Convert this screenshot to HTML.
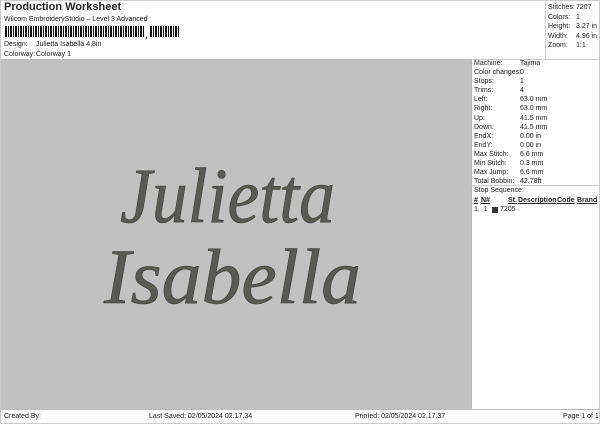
<!DOCTYPE html>
<html><head><style>
*{margin:0;padding:0;box-sizing:border-box}
body{width:600px;height:424px;background:#fff;font-family:"Liberation Sans",sans-serif;color:#222;position:relative;overflow:hidden;font-size:7px}
.a{position:absolute;white-space:nowrap}
#frame{position:absolute;left:0;top:0;width:600px;height:424px;border:1px solid #ccc}
#gray{position:absolute;left:1px;top:59px;width:470px;height:350px;background:#c1c1c1}
#rp{position:absolute;left:471px;top:59px;width:128px;height:350px;border-left:1px solid #bbb;border-top:1px solid #ccc}
#tr{position:absolute;left:545px;top:0;width:55px;height:59px;border-left:1px solid #ccc}
#foot{position:absolute;left:0;top:409px;width:600px;height:15px;border-top:1px solid #bbb}
.row{position:absolute;left:474px}
.v{position:absolute;left:520px}
</style></head><body>
<div id="frame"></div>
<div class="a" style="left:4px;top:1px;font-size:11px;font-weight:bold">Production Worksheet</div>
<div class="a" style="left:4px;top:16px">Wilcom EmbroideryStudio – Level 3 Advanced</div>
<div class="a" style="left:5px;top:26px;width:140px;height:11px;background:repeating-linear-gradient(90deg,#111 0 2px,#fff 2px 3px,#111 3px 4px,#fff 4px 5px)"></div>
<div class="a" style="left:145px;top:30px;font-size:9px;font-weight:bold">,</div>
<div class="a" style="left:150px;top:26px;width:30px;height:11px;background:repeating-linear-gradient(90deg,#111 0 2px,#fff 2px 3px,#111 3px 4px,#fff 4px 5px)"></div>
<div class="a" style="left:4px;top:41px">Design:</div><div class="a" style="left:36px;top:41px">Julietta Isabella 4,8in</div>
<div class="a" style="left:4px;top:51px">Colorway:</div><div class="a" style="left:36px;top:51px">Colorway 1</div>
<div id="tr"></div>
<div class="a" style="left:548px;top:3px;line-height:9.5px">Stitches:<br>Colors:<br>Height:<br>Width:<br>Zoom:</div>
<div class="a" style="left:576px;top:3px;line-height:9.5px">7207<br>1<br>3.27 in<br>4.96 in<br>1:1</div>
<div id="gray"></div>
<svg class="a" style="left:0;top:0" width="600" height="424">
<g fill="#5a5a52" stroke="#3a3a34" stroke-width="0.6" font-family="Liberation Serif" font-style="italic">
<text x="120" y="222" font-size="78" textLength="215" lengthAdjust="spacingAndGlyphs">Julietta</text>
<text x="104" y="303" font-size="78" textLength="257" lengthAdjust="spacingAndGlyphs">Isabella</text>
</g></svg>
<div id="rp"></div>
<div class="row" style="top:59px;line-height:9.1px">Machine:<br>Color changes:<br>Stops:<br>Trims:<br>Left:<br>Right:<br>Up:<br>Down:<br>EndX:<br>EndY:<br>Max Stitch:<br>Min Stitch:<br>Max Jump:<br>Total Bobbin:</div>
<div class="v" style="top:59px;line-height:9.1px">Tajima<br>0<br>1<br>4<br>63.0 mm<br>63.0 mm<br>41.5 mm<br>41.5 mm<br>0.00 in<br>0.00 in<br>6.6 mm<br>0.3 mm<br>6.6 mm<br>42.78ft</div>
<div class="a" style="left:471px;top:185px;width:128px;border-top:1px solid #ccc"></div>
<div class="row" style="top:187px">Stop Sequence:</div>
<div class="row" style="top:197px;font-weight:bold;text-decoration:underline">#</div>
<div class="a" style="left:481px;top:197px;font-weight:bold;text-decoration:underline">N#</div>
<div class="a" style="left:508px;top:197px;font-weight:bold;text-decoration:underline">St.</div>
<div class="a" style="left:518px;top:197px;font-weight:bold;text-decoration:underline">Description</div>
<div class="a" style="left:557px;top:197px;font-weight:bold;text-decoration:underline">Code</div>
<div class="a" style="left:577px;top:197px;font-weight:bold;text-decoration:underline">Brand</div>
<div class="row" style="top:206px">1.&nbsp; 1</div>
<div class="a" style="left:492px;top:207px;width:6px;height:6px;background:#333"></div>
<div class="a" style="left:500px;top:206px">7205</div>
<div id="foot"></div>
<div class="a" style="left:4px;top:413px">Created By:</div>
<div class="a" style="left:149px;top:413px">Last Saved: 02/05/2024 02.17.34</div>
<div class="a" style="left:355px;top:413px">Printed: 02/05/2024 02.17.37</div>
<div class="a" style="left:563px;top:413px">Page 1 of 1</div>
</body></html>
